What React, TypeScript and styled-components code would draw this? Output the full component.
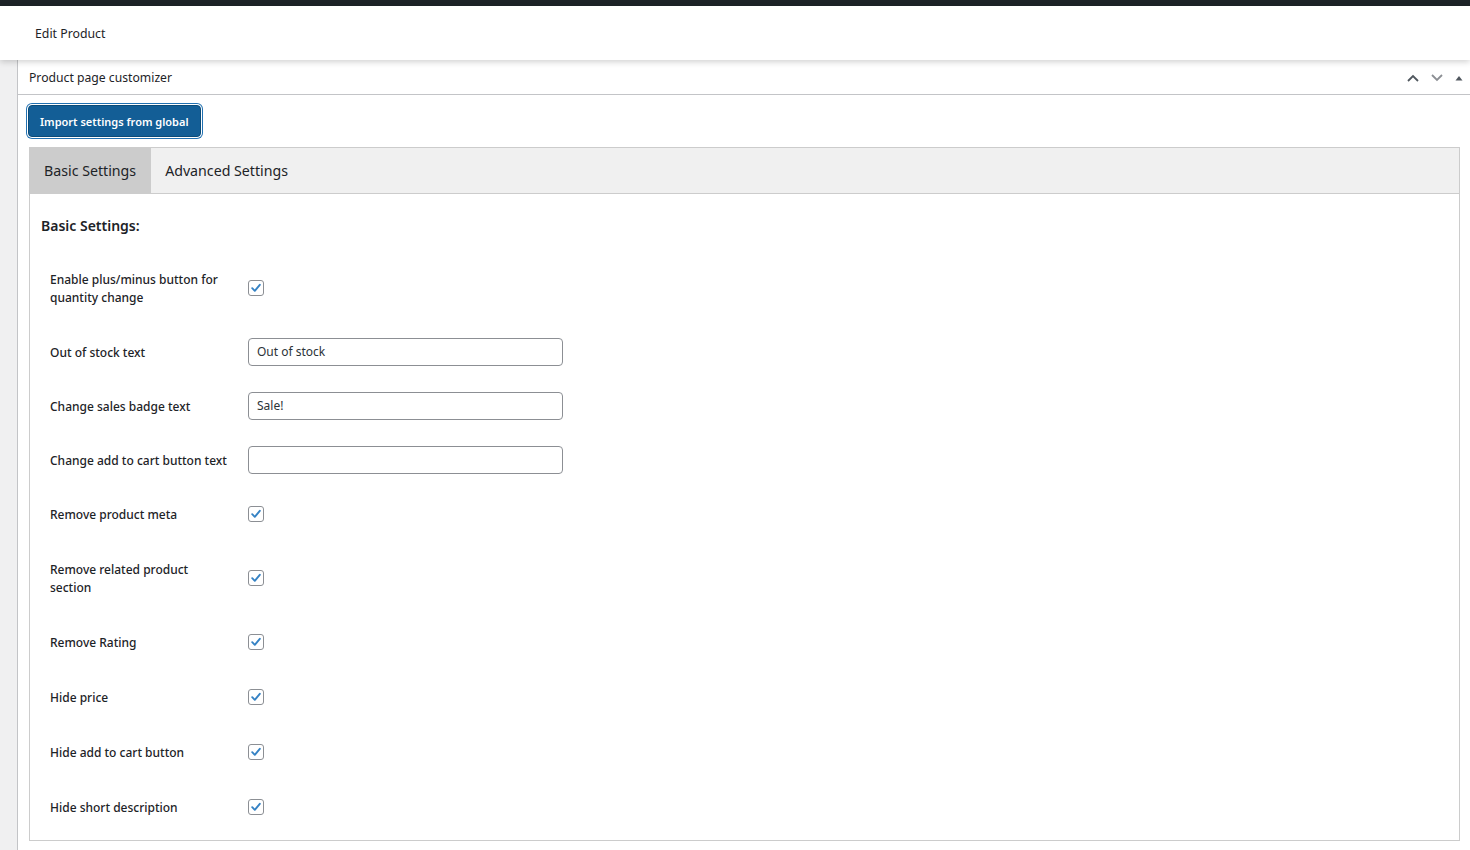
import React from "react";
import styled, { createGlobalStyle } from "styled-components";

const GlobalStyle = createGlobalStyle`
  html, body {
    margin: 0;
    padding: 0;
    background: #f0f0f1;
    font-family: "Noto Sans", "Open Sans", sans-serif;
    color: #1d2327;
  }
`;

interface Row {
  label: string;
  kind: "check" | "text";
  value?: string;
}

const rows: Row[] = [
  { label: "Enable plus/minus button for quantity change", kind: "check" },
  { label: "Out of stock text", kind: "text", value: "Out of stock" },
  { label: "Change sales badge text", kind: "text", value: "Sale!" },
  { label: "Change add to cart button text", kind: "text", value: "" },
  { label: "Remove product meta", kind: "check" },
  { label: "Remove related product section", kind: "check" },
  { label: "Remove Rating", kind: "check" },
  { label: "Hide price", kind: "check" },
  { label: "Hide add to cart button", kind: "check" },
  { label: "Hide short description", kind: "check" }
];

function Check() {
  return (
    <CheckBox>
      <svg width="12" height="12" viewBox="0 0 12 12">
        <path d="M2.2 6.2 L4.8 8.8 L9.8 2.8" fill="none" stroke="#3582c4" strokeWidth="1.9" strokeLinecap="round" strokeLinejoin="round" />
      </svg>
    </CheckBox>
  );
}

export default function App() {
  return (
    <>
      <GlobalStyle />
      <TopBar />
      <Header>Edit Product</Header>
      <Page>
        <Postbox>
          <PostboxHead>
            <span>Product page customizer</span>
            <HeadIcons>
              <svg width="14" height="10" viewBox="0 0 14 10">
                <path d="M2 8 L7 3 L12 8" fill="none" stroke="#50575e" strokeWidth="1.8" />
              </svg>
              <svg width="14" height="10" viewBox="0 0 14 10">
                <path d="M2 2 L7 7 L12 2" fill="none" stroke="#8c8f94" strokeWidth="1.8" />
              </svg>
              <svg width="10" height="10" viewBox="0 0 10 10">
                <path d="M1.5 7.5 L5 3 L8.5 7.5 Z" fill="#50575e" />
              </svg>
            </HeadIcons>
          </PostboxHead>
          <PostboxBody>
            <ImportButton>Import settings from global</ImportButton>
            <Tabs>
              <TabBar>
                <Tab $active>Basic Settings</Tab>
                <Tab>Advanced Settings</Tab>
              </TabBar>
              <TabPanel>
                <SectionTitle>Basic Settings:</SectionTitle>
                {rows.map((row) => (
                  <FieldRow key={row.label} $check={row.kind === "check"}>
                    <FieldLabel>{row.label}</FieldLabel>
                    <Control>
                      {row.kind === "check" ? (
                        <Check />
                      ) : (
                        <TextInput defaultValue={row.value} />
                      )}
                    </Control>
                  </FieldRow>
                ))}
              </TabPanel>
            </Tabs>
          </PostboxBody>
        </Postbox>
      </Page>
    </>
  );
}

const TopBar = styled("div")`
  height: 6px;
  background: #1d2327;
`;

const Header = styled("div")`
  position: relative;
  z-index: 2;
  height: 54px;
  background: #fff;
  display: flex;
  align-items: center;
  padding-left: 35px;
  font-size: 12.3px;
  box-shadow: 0 2px 6px rgba(0, 0, 0, 0.18);
`;

const Page = styled("div")`
  padding-left: 17px;
  background: #f0f0f1;
`;

const Postbox = styled("div")`
  background: #fff;
  border-left: 1px solid #c3c4c7;
  min-height: 800px;
`;

const PostboxHead = styled("div")`
  height: 34px;
  border-bottom: 1px solid #c3c4c7;
  display: flex;
  align-items: center;
  justify-content: space-between;
  padding: 0 6px 0 11px;
  font-size: 12.2px;
`;

const HeadIcons = styled("div")`
  display: flex;
  align-items: center;
  gap: 10px;
  margin-top: 1px;
`;

const PostboxBody = styled("div")`
  padding: 10px 10px 0 9px;
`;

const ImportButton = styled("button")`
  font-family: inherit;
  font-size: 11px;
  font-weight: 600;
  color: #fff;
  background: #135e96;
  border: 1px solid #0a4b78;
  border-radius: 4px;
  height: 32px;
  padding: 0 11px;
  box-shadow: 0 0 0 1px #fff, 0 0 0 2px #2271b1;
  margin-left: 1px;
  cursor: pointer;
  display: block;
`;

const Tabs = styled("div")`
  margin-top: 10px;
  margin-left: 2px;
  border: 1px solid #ccc;
  height: 694px;
  box-sizing: border-box;
  background: #fff;
`;

const TabBar = styled("div")`
  display: flex;
  height: 45px;
  background: #f0f0f0;
  border-bottom: 1px solid #ccc;
`;

const Tab = styled("div")<{ $active?: boolean }>`
  display: flex;
  align-items: center;
  padding: 0 15px 0 14px;
  font-size: 14.2px;
  background: ${(p) => (p.$active ? "#ccc" : "transparent")};
`;

const TabPanel = styled("div")`
  padding: 20px 11px 0;
`;

const SectionTitle = styled("div")`
  font-size: 14px;
  font-weight: 600;
  line-height: 24px;
  margin-bottom: 15px;
`;

const FieldRow = styled("div")<{ $check?: boolean }>`
  display: flex;
  align-items: center;
  padding: ${(p) => (p.$check ? "18px 9px 19px" : "18px 9px")};
`;

const FieldLabel = styled("div")`
  width: 180px;
  margin-right: 18px;
  font-size: 12px;
  font-weight: 500;
  line-height: 18px;
`;

const Control = styled("div")`
  height: 18px;
  margin-top: -3px;
  display: flex;
  align-items: center;
`;

const CheckBox = styled("span")`
  width: 14px;
  height: 14px;
  border: 1px solid #8c8f94;
  border-radius: 3px;
  display: flex;
  align-items: center;
  justify-content: center;
`;

const TextInput = styled("input")`
  width: 315px;
  height: 28px;
  flex-shrink: 0;
  box-sizing: border-box;
  border: 1px solid #8c8f94;
  border-radius: 4px;
  padding: 0 8px;
  font-family: inherit;
  font-size: 12px;
  color: #2c3338;
`;
